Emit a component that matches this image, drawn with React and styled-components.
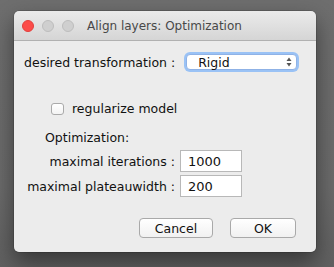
import React from "react";
import styled, { createGlobalStyle } from "styled-components";

const Global = createGlobalStyle`
  html, body { margin: 0; padding: 0; }
  body {
    background: #6c6c6c;
    font-family: "DejaVu Sans", "Liberation Sans", sans-serif;
  }
`;

const Desktop = styled.div`
  width: 334px;
  height: 267px;
  box-sizing: border-box;
  padding: 11px 0 0 14px;
  background: linear-gradient(180deg, #6e6e6e 0%, #6a6a6a 70%, #606060 100%);
  overflow: hidden;
`;

const Window = styled.div`
  width: 302px;
  height: 241px;
  border-radius: 5px;
  overflow: hidden;
  display: flex;
  flex-direction: column;
  box-shadow: 0 10px 22px rgba(0, 0, 0, 0.45), 0 0 0 0.5px rgba(0, 0, 0, 0.25);
`;

const TitleBar = styled.div`
  height: 29px;
  flex: none;
  display: flex;
  align-items: center;
  padding-left: 8px;
  background: linear-gradient(180deg, #ebebeb 0%, #d5d5d5 100%);
  border-bottom: 1px solid #b1b1b1;
`;

const Light = styled.span`
  width: 12px;
  height: 12px;
  border-radius: 50%;
  margin-right: 8px;
  box-sizing: border-box;
  background: ${(p) => (p.$red ? "#fc4c49" : "#cfcfcf")};
  border: 1px solid ${(p) => (p.$red ? "#e2403d" : "#bdbdbd")};
`;

const Title = styled.div`
  margin-left: 5px;
  font-size: 12px;
  color: #484848;
`;

const Body = styled.div`
  flex: 1;
  background: #ececec;
  padding: 13px 0 0 10px;
  font-size: 12.5px;
  color: #111;
`;

const Row = styled.div`
  display: flex;
  align-items: center;
`;

const Label = styled.span`
  white-space: nowrap;
`;

const Select = styled.div`
  margin-left: 11px;
  width: 111px;
  height: 16px;
  box-sizing: border-box;
  border-radius: 4px;
  background: #fff;
  border: 1px solid #8fb2e6;
  box-shadow: 0 0 0 2px #9ac2f5;
  display: flex;
  align-items: center;
  justify-content: space-between;
  padding: 0 4px 0 11px;
  font-size: 12.5px;
`;

const Arrows = styled.svg`
  width: 6px;
  height: 10px;
`;

const CheckRow = styled.label`
  display: flex;
  align-items: center;
  margin: 31px 0 0 27px;
`;

const Box = styled.span`
  width: 13px;
  height: 12px;
  box-sizing: border-box;
  border: 1px solid #aaa;
  border-radius: 3px;
  background: linear-gradient(180deg, #fff, #f3f3f3);
  margin-right: 8px;
`;

const Section = styled.div`
  margin: 14px 0 0 21px;
`;

const Fields = styled.div`
  display: grid;
  grid-template-columns: 151px 62px;
  column-gap: 5px;
  row-gap: 3px;
  align-items: center;
  margin-top: 5px;
`;

const FieldLabel = styled.span`
  text-align: right;
  white-space: nowrap;
`;

const Input = styled.div`
  height: 22px;
  box-sizing: border-box;
  background: #fff;
  border: 1px solid #b8b8b8;
  padding-left: 7px;
  display: flex;
  align-items: center;
  font-size: 13px;
`;

const Buttons = styled.div`
  display: flex;
  justify-content: flex-end;
  gap: 17px;
  margin: 21px 20px 0 0;
`;

const Button = styled.button`
  width: ${(p) => p.$w}px;
  height: 20px;
  box-sizing: border-box;
  border: 1px solid #a9a9a9;
  border-radius: 4px;
  background: linear-gradient(180deg, #ffffff, #f1f1f1);
  font-family: inherit;
  font-size: 12.5px;
  color: #111;
  padding: 0;
`;

export default function App() {
  return (
    <>
      <Global />
      <Desktop>
        <Window>
          <TitleBar>
            <Light $red />
            <Light />
            <Light />
            <Title>Align layers: Optimization</Title>
          </TitleBar>
          <Body>
            <Row>
              <Label>desired transformation :</Label>
              <Select>
                Rigid
                <Arrows viewBox="0 0 6 10">
                  <path d="M3 0.5 L5.5 4 L0.5 4 Z" fill="#555" />
                  <path d="M3 9.5 L5.5 6 L0.5 6 Z" fill="#555" />
                </Arrows>
              </Select>
            </Row>
            <CheckRow>
              <Box />
              regularize model
            </CheckRow>
            <Section>
              <div>Optimization:</div>
            </Section>
            <Fields>
              <FieldLabel>maximal iterations :</FieldLabel>
              <Input>1000</Input>
              <FieldLabel>maximal plateauwidth :</FieldLabel>
              <Input>200</Input>
            </Fields>
            <Buttons>
              <Button $w={74}>Cancel</Button>
              <Button $w={66}>OK</Button>
            </Buttons>
          </Body>
        </Window>
      </Desktop>
    </>
  );
}
